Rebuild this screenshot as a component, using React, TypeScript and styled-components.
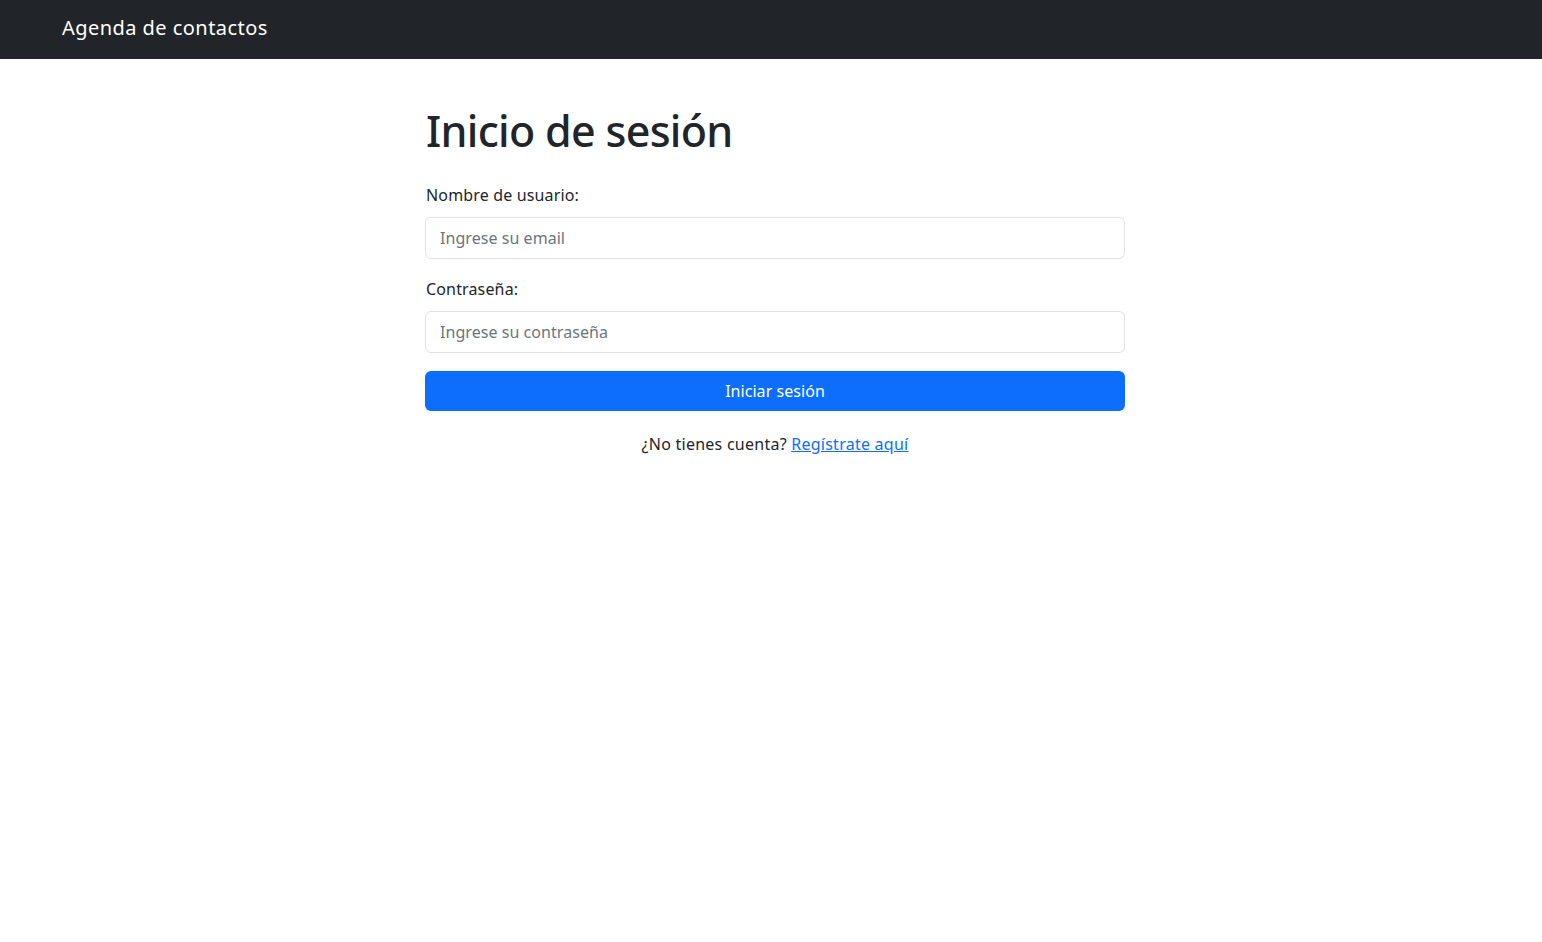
import React from "react";
import styled, { createGlobalStyle } from "styled-components";

const Global = createGlobalStyle`
  * { box-sizing: border-box; }
  html, body { margin: 0; padding: 0; background: #fff; }
  body {
    font-family: "Noto Sans", "Open Sans", "Liberation Sans", sans-serif;
    color: #212529;
    font-size: 16px;
    line-height: 1.5;
  }
`;

const Navbar = styled.nav`
  height: 59px;
  background: #212529;
  display: flex;
  align-items: center;
  padding-left: 62px;
  padding-bottom: 3px;
`;

const Brand = styled.a`
  color: #fff;
  font-size: 20px;
  line-height: 1.5;
  text-decoration: none;
  letter-spacing: 0.45px;
`;

const Main = styled.main`
  width: 700px;
  margin-left: 425px;
  padding-top: 43px;
  display: flex;
  flex-direction: column;
`;

const Title = styled.h1`
  margin: 0 0 23px 1px;
  font-size: 43px;
  font-weight: 500;
  line-height: 58px;
  letter-spacing: -0.7px;
`;

const Field = styled.div`
  display: flex;
  flex-direction: column;
  margin-bottom: 18px;
`;

const Label = styled.label`
  font-size: 16px;
  line-height: 24px;
  margin: 0 0 10px 1px;
  letter-spacing: 0.15px;
`;

const Input = styled.input`
  height: 42px;
  width: 100%;
  border: 1px solid #dee2e6;
  border-radius: 6px;
  padding: 0 14px;
  font-family: inherit;
  font-size: 16px;
  letter-spacing: 0.05px;
  color: #212529;
  background: #fff;
  outline: none;
  &::placeholder { color: #6c757d; opacity: 1; }
`;

const Button = styled.button`
  height: 40px;
  width: 100%;
  border: none;
  border-radius: 6px;
  background: #0d6efd;
  color: #fff;
  font-family: inherit;
  font-size: 16px;
  letter-spacing: 0.05px;
  cursor: pointer;
`;

const Footer = styled.p`
  margin: 21px 0 0;
  text-align: center;
  font-size: 16px;
  line-height: 24px;
  letter-spacing: 0.25px;
`;

const Link = styled.a`
  color: #0d6efd;
  text-decoration: underline;
`;

export default function App() {
  return (
    <>
      <Global />
      <Navbar>
        <Brand href="#">Agenda de contactos</Brand>
      </Navbar>
      <Main>
        <Title>Inicio de sesión</Title>
        <Field>
          <Label htmlFor="email">Nombre de usuario:</Label>
          <Input id="email" placeholder="Ingrese su email" />
        </Field>
        <Field>
          <Label htmlFor="pass">Contraseña:</Label>
          <Input id="pass" type="password" placeholder="Ingrese su contraseña" />
        </Field>
        <Button>Iniciar sesión</Button>
        <Footer>
          ¿No tienes cuenta? <Link href="#">Regístrate aquí</Link>
        </Footer>
      </Main>
    </>
  );
}
